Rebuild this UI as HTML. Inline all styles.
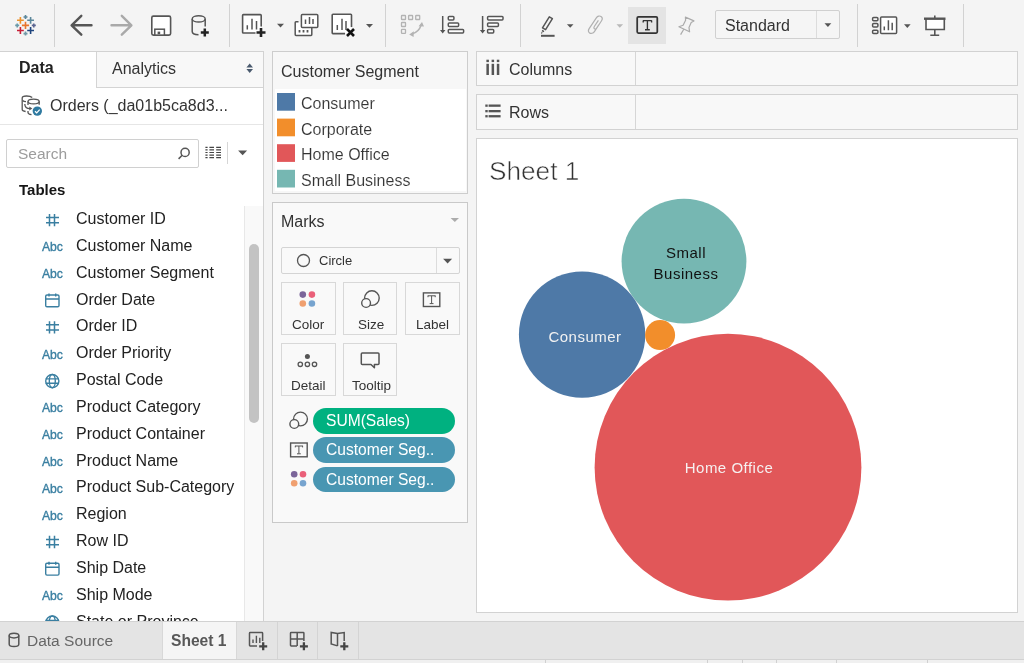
<!DOCTYPE html>
<html><head><meta charset="utf-8">
<style>
*{box-sizing:border-box;margin:0;padding:0}
html,body{-webkit-font-smoothing:antialiased;width:1024px;height:663px;overflow:hidden;background:#f4f4f4;font-family:"Liberation Sans",sans-serif;color:#333}
.a{position:absolute}
.sep{position:absolute;top:4px;width:1px;height:43px;background:#d2d2d2}
.txt{position:absolute;white-space:nowrap;line-height:1;will-change:transform}
#ov{position:absolute;left:0;top:0;width:1024px;height:663px}
</style></head><body>
<!-- toolbar -->
<div class="a" style="left:0;top:0;width:1024px;height:52px;background:#f4f4f4"></div>
<div class="sep" style="left:54px"></div>
<div class="sep" style="left:229px"></div>
<div class="sep" style="left:385px"></div>
<div class="sep" style="left:520px"></div>
<div class="sep" style="left:857px"></div>
<div class="sep" style="left:963px"></div>
<div class="a" style="left:628px;top:7px;width:38px;height:37px;background:#e4e4e4"></div>
<div class="a" style="left:715px;top:10px;width:125px;height:29px;background:#f5f5f5;border:1px solid #d0d0d0;border-radius:2px"></div>
<div class="a" style="left:816px;top:11px;width:1px;height:27px;background:#dcdcdc"></div>

<!-- left panel -->
<div class="a" style="left:0;top:51px;width:264px;height:570px;background:#fff;border-right:1px solid #d2d2d2;border-top:1px solid #d2d2d2"></div>
<div class="a" style="left:96px;top:52px;width:167px;height:36px;background:#f8f8f8;border-left:1px solid #d4d4d4;border-bottom:1px solid #d4d4d4"></div>
<div class="a" style="left:0;top:124px;width:263px;height:1px;background:#e6e6e6"></div>
<div class="a" style="left:6px;top:139px;width:193px;height:29px;border:1px solid #d0d0d0;border-radius:2px;background:#fff"></div>
<div class="a" style="left:227px;top:142px;width:1px;height:22px;background:#d6d6d6"></div>
<!-- scrollbar -->
<div class="a" style="left:244px;top:206px;width:19px;height:415px;background:#f9f9f9;border-left:1px solid #e8e8e8"></div>
<div class="a" style="left:249px;top:244px;width:10px;height:179px;background:#c3c3c3;border-radius:5px"></div>

<!-- legend card -->
<div class="a" style="left:272px;top:51px;width:196px;height:143px;background:#f7f7f7;border:1px solid #cdcdcd"></div>
<div class="a" style="left:275px;top:89px;width:191px;height:102px;background:#fff"></div>

<!-- marks card -->
<div class="a" style="left:272px;top:202px;width:196px;height:321px;background:#f9f9f9;border:1px solid #c9c9c9"></div>
<div class="a" style="left:281px;top:247px;width:179px;height:27px;background:#f9f9f9;border:1px solid #d4d4d4;border-radius:2px"></div>
<div class="a" style="left:436px;top:248px;width:1px;height:25px;background:#dcdcdc"></div>
<div class="a" style="left:281px;top:282px;width:55px;height:53px;border:1px solid #d8d8d8"></div>
<div class="a" style="left:343px;top:282px;width:54px;height:53px;border:1px solid #d8d8d8"></div>
<div class="a" style="left:405px;top:282px;width:55px;height:53px;border:1px solid #d8d8d8"></div>
<div class="a" style="left:281px;top:343px;width:55px;height:53px;border:1px solid #d8d8d8"></div>
<div class="a" style="left:343px;top:343px;width:54px;height:53px;border:1px solid #d8d8d8"></div>
<div class="a" style="left:313px;top:408px;width:142px;height:25.5px;background:#00b180;border-radius:13px"></div>
<div class="a" style="left:313px;top:437.3px;width:142px;height:25.5px;background:#4996b2;border-radius:13px"></div>
<div class="a" style="left:313px;top:466.8px;width:142px;height:25.5px;background:#4996b2;border-radius:13px"></div>

<!-- shelves -->
<div class="a" style="left:476px;top:51px;width:542px;height:35px;background:#f8f8f8;border:1px solid #d2d2d2"></div>
<div class="a" style="left:635px;top:52px;width:1px;height:33px;background:#d6d6d6"></div>
<div class="a" style="left:476px;top:94px;width:542px;height:36px;background:#f8f8f8;border:1px solid #d2d2d2"></div>
<div class="a" style="left:635px;top:95px;width:1px;height:34px;background:#d6d6d6"></div>

<!-- sheet -->
<div class="a" style="left:476px;top:138px;width:542px;height:475px;background:#fff;border:1px solid #d2d2d2"></div>

<!-- tab bar -->
<div class="a" style="left:0;top:621px;width:1024px;height:38px;background:#e4e4e4;border-top:1px solid #d2d2d2"></div>
<div class="a" style="left:0;top:659px;width:1024px;height:4px;background:#f0f0f0;border-top:1px solid #d2d2d2"></div>
<div class="a" style="left:545px;top:660px;width:1px;height:3px;background:#d0d0d0"></div><div class="a" style="left:707px;top:660px;width:1px;height:3px;background:#d0d0d0"></div><div class="a" style="left:742px;top:660px;width:1px;height:3px;background:#d0d0d0"></div><div class="a" style="left:776px;top:660px;width:1px;height:3px;background:#d0d0d0"></div><div class="a" style="left:836px;top:660px;width:1px;height:3px;background:#d0d0d0"></div><div class="a" style="left:927px;top:660px;width:1px;height:3px;background:#d0d0d0"></div>
<div class="a" style="left:162px;top:622px;width:75px;height:37px;background:#f5f5f5;border-left:1px solid #d8d8d8;border-right:1px solid #d8d8d8"></div>
<div class="a" style="left:277px;top:622px;width:1px;height:37px;background:#d4d4d4"></div>
<div class="a" style="left:317px;top:622px;width:1px;height:37px;background:#d4d4d4"></div>
<div class="a" style="left:358px;top:622px;width:1px;height:37px;background:#d4d4d4"></div>

<svg id="ov" width="1024" height="663" viewBox="0 0 1024 663">
<!-- tableau logo -->
<g stroke-width="1.6" fill="none">
<path d="M21.9 25.4H29.1M25.5 21.8V29" stroke="#e8762d"/>
<path d="M17 20.3H23.8M20.4 16.9V23.7" stroke="#eb912b"/>
<path d="M27.2 20.3H34M30.6 16.9V23.7" stroke="#5b879b"/>
<path d="M17 30.5H23.8M20.4 27.1V33.9" stroke="#c72037"/>
<path d="M27.2 30.5H34M30.6 27.1V33.9" stroke="#1f457e"/>
<path d="M23.5 17H27.5M25.5 15V19" stroke="#5b879b"/>
<path d="M15.2 25.4H19.2M17.2 23.4V27.4" stroke="#6a99a8"/>
<path d="M31.8 25.4H35.8M33.8 23.4V27.4" stroke="#5c6692"/>
<path d="M23.5 33.6H27.5M25.5 31.6V35.6" stroke="#7099a6"/>
</g>
<!-- back / forward -->
<path d="M81.3 15.8L71.6 25.3L81.3 34.7M72 25.3H91.5" stroke="#555" stroke-width="2.4" fill="none" stroke-linecap="round" stroke-linejoin="round"/>
<path d="M121.8 15.8L131.4 25.3L121.8 34.7M111.5 25.3H131" stroke="#a9a9a9" stroke-width="2.4" fill="none" stroke-linecap="round" stroke-linejoin="round"/>
<!-- save -->
<rect x="151.8" y="16.1" width="18.8" height="19" rx="1.6" fill="#fff" stroke="#555" stroke-width="1.6"/>
<rect x="154.8" y="29.2" width="9.6" height="5.9" fill="#fff" stroke="#555" stroke-width="1.5"/>
<rect x="157.6" y="31.6" width="2.6" height="2.6" fill="#555"/>
<!-- datasource add -->
<g fill="none" stroke="#555" stroke-width="1.5">
<ellipse cx="198.7" cy="18.9" rx="6.5" ry="3.1"/>
<path d="M192.2 18.9V31.4C192.2 33.4 195 34.6 198.5 34.7M205.2 18.9V26.5"/>
</g>
<rect x="194.5" y="18" width="8" height="3" fill="#fff" opacity="0"/>
<path d="M204.8 28.4V36.4M200.8 32.4H208.8" stroke="#222" stroke-width="2.5"/>
<g fill="#fff">
<rect x="243" y="15" width="18" height="17.6"/>
<rect x="301.8" y="14.9" width="15.6" height="12.2"/>
<rect x="295.6" y="22.2" width="15.8" height="12.8"/>
<rect x="332.6" y="14.7" width="18.5" height="18.5"/>
<rect x="881" y="17.4" width="15.2" height="15.8"/>
<rect x="926.5" y="19.5" width="17.3" height="9.5"/>
</g>
<!-- new worksheet -->
<g fill="none" stroke="#555" stroke-width="1.6">
<path d="M255.5 33H243.4C242.9 33 242.6 32.7 242.6 32.2V15.4C242.6 14.9 242.9 14.6 243.4 14.6H260.4C260.9 14.6 261.2 14.9 261.2 15.4V26.5"/>
<path d="M247.3 25.2V29.6M252 18.7V29.6M256.5 21V29.6" stroke-width="1.5"/>
</g>
<path d="M261 28V37M256.5 32.5H265.5" stroke="#222" stroke-width="2.6"/>
<path d="M277 23.7H284L280.5 27.5Z" fill="#555"/>
<!-- duplicate -->
<g fill="none" stroke="#555" stroke-width="1.5">
<rect x="301.4" y="14.5" width="16.4" height="13" rx="1"/>
<path d="M298.5 21.8H296C295.5 21.8 295.2 22.1 295.2 22.6V34.6C295.2 35.1 295.5 35.4 296 35.4H311C311.5 35.4 311.8 35.1 311.8 34.6V27.5"/>
<path d="M305.5 19.5V24M309.5 17V24M313 19V24"/>
<path d="M299.5 30V32.5M303.5 30V32.5M307.5 30V32.5" stroke-width="1.8"/>
</g>
<!-- clear sheet -->
<g fill="none" stroke="#555" stroke-width="1.6">
<path d="M345 33.6H333C332.5 33.6 332.2 33.3 332.2 32.8V15.1C332.2 14.6 332.5 14.3 333 14.3H350.7C351.2 14.3 351.5 14.6 351.5 15.1V27"/>
<path d="M337.3 25V30M342 18.7V30M346 21V30" stroke-width="1.5"/>
</g>
<path d="M347 29L354 36M354 29L347 36" stroke="#111" stroke-width="2.6"/>
<path d="M366 24H373L369.5 27.8Z" fill="#555"/>
<!-- swap (disabled) -->
<g fill="none" stroke="#b3b3b3" stroke-width="1.3">
<rect x="401.5" y="15.5" width="4" height="4" rx="0.6"/>
<rect x="408.6" y="15.5" width="4" height="4" rx="0.6"/>
<rect x="415.7" y="15.5" width="4" height="4" rx="0.6"/>
<rect x="401.5" y="22.5" width="4" height="4" rx="0.6"/>
<rect x="401.5" y="29.4" width="4" height="4" rx="0.6"/>
<path d="M412 34C416.2 32.8 419.6 29.8 421.2 25" stroke-width="1.5"/>
</g>
<path d="M409.2 34.6L413.8 31.2L413.6 37Z M422 22L418.6 26.2L424 26.6Z" fill="#b3b3b3"/>
<!-- sort asc -->
<g fill="#fff" stroke="#555" stroke-width="1.5">
<path d="M442.7 16V31"/>
<rect x="448.3" y="16.4" width="5.6" height="3.6" rx="0.9"/>
<rect x="448.3" y="22.9" width="10.3" height="3.6" rx="0.9"/>
<rect x="448.3" y="29.4" width="15.3" height="3.6" rx="0.9"/>
<path d="M482.6 16V31"/>
<rect x="487.6" y="16.4" width="15.4" height="3.6" rx="0.9"/>
<rect x="487.6" y="22.9" width="10.8" height="3.6" rx="0.9"/>
<rect x="487.6" y="29.4" width="6.1" height="3.6" rx="0.9"/>
</g>
<path d="M440 30H445.4L442.7 33.6Z M479.9 30H485.3L482.6 33.6Z" fill="#555"/>
<!-- highlighter -->
<g fill="none" stroke="#555" stroke-width="1.5">
<path d="M549.3 16.8L552.4 18.6L545.6 29.6L542.5 27.8Z" stroke-linejoin="round"/>
<path d="M542 30.5L544 31.7M541.3 32.6L542.3 33.2"/>
</g>
<path d="M541 35.8H554.6" stroke="#555" stroke-width="2"/>
<path d="M566.9 24.3H573.5L570.2 27.8Z" fill="#555"/>
<!-- paperclip -->
<path d="M598.6 25.2L594.4 31.6C593.2 33.4 590.9 33.8 589.6 32.9C588.3 32 588.1 30.2 589.3 28.4L596.5 17.6C597.6 16 599.7 15.6 601 16.5C602.3 17.4 602.5 19.4 601.4 21L596.7 28.1C596.1 29 595.1 29.3 594.4 28.8C593.7 28.3 593.7 27.4 594.3 26.5L598.4 20.3" fill="none" stroke="#b0b0b0" stroke-width="1.2"/>
<path d="M616.5 24.3H623.1L619.8 27.8Z" fill="#b9b9b9"/>
<!-- text toggle -->
<rect x="637.2" y="16.8" width="20.1" height="16.2" rx="1.2" fill="none" stroke="#333" stroke-width="1.75"/>
<path d="M643 20.6H651.8M643.2 20.4V22.4M651.6 20.4V22.4M647.4 20.6V29.6M645 29.7H649.8" fill="none" stroke="#333" stroke-width="1.35"/>
<!-- pin -->
<g fill="none" stroke="#ababab" stroke-width="1.2" stroke-linejoin="round">
<path d="M685.4 17.1L693.9 20.9L691.2 22.5L689 27.6L689.6 31.8L678.9 26.7L683.1 25.2L685.6 20.3Z"/>
<path d="M683.8 29.2L680.6 34.6"/>
</g>
<!-- standard arrow -->
<path d="M824.5 23.3H831.3L827.9 27.1Z" fill="#555"/>
<!-- show me -->
<g fill="none" stroke="#555" stroke-width="1.5">
<rect x="872.6" y="17.4" width="5.3" height="3.4" rx="1"/>
<rect x="872.6" y="23.6" width="5.3" height="3.4" rx="1"/>
<rect x="872.6" y="30.2" width="5.3" height="3.4" rx="1"/>
<rect x="880.6" y="17" width="16" height="16.6" rx="1"/>
<path d="M884.3 26.5V30.2M888.4 20.2V30.2M892.2 22.7V30.2"/>
</g>
<path d="M904 24.3H910.6L907.3 27.9Z" fill="#555"/>
<!-- presentation -->
<g fill="none" stroke="#555">
<path d="M924 18.7H945.5" stroke-width="2.4"/>
<path d="M934.8 15.6V18M926 19V29.5H944.3V19M934.8 29.5V35M930.3 35.2H939.2" stroke-width="1.6"/>
</g>

<!-- left panel icons -->
<path d="M246.4 67.6H253L249.7 63.6Z M246.4 69.1H253L249.7 72.9Z" fill="#4a5a6e"/>
<!-- orders icon -->
<g fill="none" stroke="#555" stroke-width="1.3">
<path d="M32.2 97.6C31 96.5 28.6 96 26.6 96C24 96 22.2 96.8 22.2 97.9V109.5C22.2 110.4 23.4 111.2 25.6 111.5"/>
<path d="M22.6 100.5C23.3 101.2 24.6 101.6 26 101.6"/>
<ellipse cx="33.6" cy="101.5" rx="5.6" ry="2.4"/>
<path d="M28 101.5V105M39.2 101.5V104.7"/>
<path d="M24.8 104C24.8 107 26.5 108.6 30 108.6" stroke-width="1.3"/>
<path d="M28 111V112.5C28 113.6 30 114.5 31.5 114.7"/>
</g>
<path d="M29.3 106.6L32.3 108.6L29.3 110.6Z" fill="#555"/>
<circle cx="37.3" cy="111.1" r="4.7" fill="#2f7aa0"/>
<path d="M35 111.2L36.7 112.9L39.7 109.6" fill="none" stroke="#fff" stroke-width="1.3"/>
<!-- search -->
<g fill="none" stroke="#555" stroke-width="1.5">
<circle cx="185.1" cy="152.4" r="4.1"/>
<path d="M182.2 155.3L178.6 158.9"/>
</g>
<g stroke="#444" stroke-width="1.2">
<path d="M205.4 147.3H207.6M209.4 147.3H214M216.2 147.3H221"/>
<path d="M205.4 149.9H207.6M209.4 149.9H214M216.2 149.9H221"/>
<path d="M205.4 152.5H207.6M209.4 152.5H214M216.2 152.5H221"/>
<path d="M205.4 155.1H207.6M209.4 155.1H214M216.2 155.1H221"/>
<path d="M205.4 157.7H207.6M209.4 157.7H214M216.2 157.7H221"/>
</g>
<path d="M238.1 150.4H247.1L242.6 155.3Z" fill="#555"/>

<!-- legend swatches -->
<rect x="277" y="93" width="18" height="17.7" fill="#4e79a7"/>
<rect x="277" y="118.6" width="18" height="17.7" fill="#f28e2b"/>
<rect x="277" y="144.2" width="18" height="17.7" fill="#e15759"/>
<rect x="277" y="169.8" width="18" height="17.7" fill="#76b7b2"/>

<!-- marks icons -->
<path d="M450.6 217.9H459L454.8 222.1Z" fill="#acacac"/>
<circle cx="303.5" cy="260.5" r="6" fill="none" stroke="#555" stroke-width="1.3"/>
<path d="M443.1 258.8H452.1L447.6 263.5Z" fill="#555"/>
<circle cx="302.8" cy="294.6" r="3.3" fill="#7b659a"/>
<circle cx="311.9" cy="294.6" r="3.3" fill="#ea6079"/>
<circle cx="302.8" cy="303.5" r="3.3" fill="#f0a070"/>
<circle cx="311.9" cy="303.5" r="3.3" fill="#77a4cf"/>
<g fill="#f9f9f9" stroke="#555" stroke-width="1.4">
<circle cx="371.9" cy="298.1" r="7.3"/>
<circle cx="366.1" cy="303" r="4.4"/>
</g>
<rect x="423.4" y="292.9" width="16.4" height="13.6" fill="none" stroke="#555" stroke-width="1.4"/>
<path d="M427.8 295.8H435.4M428 295.6V297.2M435.2 295.6V297.2M431.6 295.8V303.4M429.7 303.6H433.5" fill="none" stroke="#555" stroke-width="1"/>
<circle cx="307.4" cy="356.5" r="2.5" fill="#555"/>
<g fill="none" stroke="#555" stroke-width="1.3">
<circle cx="300.3" cy="364.3" r="2.2"/>
<circle cx="307.4" cy="364.3" r="2.2"/>
<circle cx="314.5" cy="364.3" r="2.2"/>
<path d="M362.3 352.9H378C378.6 352.9 379 353.3 379 353.9V363.5C379 364.1 378.6 364.5 378 364.5H374.4V367.8L371 364.5H362.3C361.7 364.5 361.3 364.1 361.3 363.5V353.9C361.3 353.3 361.7 352.9 362.3 352.9Z" stroke-width="1.5" stroke-linejoin="round"/>
</g>
<!-- pill icons -->
<g fill="#f9f9f9" stroke="#555" stroke-width="1.4">
<circle cx="300.5" cy="419" r="6.9"/>
<circle cx="294.3" cy="424" r="4.4"/>
</g>
<rect x="290.6" y="443" width="16.6" height="13.8" fill="none" stroke="#555" stroke-width="1.4"/>
<path d="M295.1 446H302.8M295.3 445.8V447.4M302.6 445.8V447.4M298.9 446V453.6M297 453.8H300.8" fill="none" stroke="#555" stroke-width="1"/>
<circle cx="294.2" cy="474.2" r="3.3" fill="#7b659a"/>
<circle cx="303" cy="474.2" r="3.3" fill="#ea6079"/>
<circle cx="294.2" cy="483.3" r="3.3" fill="#f0a070"/>
<circle cx="303" cy="483.3" r="3.3" fill="#77a4cf"/>

<!-- shelf icons -->
<g fill="#555">
<rect x="486.4" y="59.7" width="2.5" height="2.4"/><rect x="491.6" y="59.7" width="2.5" height="2.4"/><rect x="496.8" y="59.7" width="2.5" height="2.4"/>
<rect x="486.4" y="63.8" width="2.5" height="11.2"/><rect x="491.6" y="63.8" width="2.5" height="11.2"/><rect x="496.8" y="63.8" width="2.5" height="11.2"/>
<rect x="485.3" y="104.5" width="2.4" height="2.3"/><rect x="485.3" y="110" width="2.4" height="2.3"/><rect x="485.3" y="115.1" width="2.4" height="2.3"/>
<rect x="488.6" y="104.5" width="12" height="2.3"/><rect x="488.6" y="110" width="12" height="2.3"/><rect x="488.6" y="115.1" width="12" height="2.3"/>
</g>

<!-- chart circles -->
<circle cx="684" cy="261.2" r="62.4" fill="#76b7b2"/>
<circle cx="582.1" cy="334.6" r="63.2" fill="#4e79a7"/>
<circle cx="660.1" cy="335.1" r="15" fill="#f28e2b"/>
<circle cx="728" cy="467.2" r="133.4" fill="#e15759"/>

<!-- bottom tab icons -->
<g fill="none" stroke="#555" stroke-width="1.5">
<ellipse cx="14" cy="635.6" rx="4.8" ry="2.3"/>
<path d="M9.2 635.6V644.3C9.2 645.6 11.4 646.6 14 646.6C16.6 646.6 18.8 645.6 18.8 644.3V635.6"/>
<path d="M257 646H250.2C249.8 646 249.5 645.7 249.5 645.3V633.2C249.5 632.8 249.8 632.5 250.2 632.5H261.9C262.3 632.5 262.6 632.8 262.6 633.2V641"/>
<path d="M253 639.5V643M256.4 635.8V643M259.8 637.8V643" stroke-width="1.4"/>
<path d="M297 646H291.2C290.8 646 290.5 645.7 290.5 645.3V633.2C290.5 632.8 290.8 632.5 291.2 632.5H303.2C303.6 632.5 303.9 632.8 303.9 633.2V641M290.5 639H303.9M297.2 632.5V646"/>
<path d="M337.5 633.5L331.2 632.5V644L337.5 645.9M337.5 633.5V645.9M337.5 633.5L344.2 632.5V641"/>
</g>
<path d="M263.2 642.3V650.3M259.2 646.3H267.2 M303.9 642.3V650.3M299.9 646.3H307.9 M344.3 642.3V650.3M340.3 646.3H348.3" stroke="#444" stroke-width="2.3"/>

<!--ICONS-->
</svg>

<!-- texts -->
<div class="txt" style="left:18.6px;top:60.1px;font-size:16px;font-weight:bold;color:#222">Data</div>
<div class="txt" style="left:112.4px;top:60.66px;font-size:16px;color:#333">Analytics</div>
<div class="txt" style="left:50.2px;top:97.8px;font-size:16px;color:#333">Orders (_da01b5ca8d3...</div>
<div class="txt" style="left:17.9px;top:146.3px;font-size:15.5px;color:#9c9c9c">Search</div>
<div class="txt" style="left:18.7px;top:181.8px;font-size:15px;font-weight:bold;color:#151515">Tables</div>
<div class="txt" style="left:281.2px;top:63.7px;font-size:16px;color:#333">Customer Segment</div>
<div class="txt" style="left:301.3px;top:96px;font-size:16px;color:#333;-webkit-text-stroke:0.12px #fff">Consumer</div>
<div class="txt" style="left:301.3px;top:121.6px;font-size:16px;color:#333;-webkit-text-stroke:0.12px #fff">Corporate</div>
<div class="txt" style="left:301.3px;top:147.2px;font-size:16px;color:#333;-webkit-text-stroke:0.12px #fff">Home Office</div>
<div class="txt" style="left:301.3px;top:172.8px;font-size:16px;color:#333;-webkit-text-stroke:0.12px #fff">Small Business</div>
<div class="txt" style="left:281.4px;top:214.4px;font-size:16px;color:#333">Marks</div>
<div class="txt" style="left:318.5px;top:254px;font-size:13px;color:#333">Circle</div>
<div class="txt" style="left:292.2px;top:317.9px;font-size:13.5px;color:#333">Color</div>
<div class="txt" style="left:357.5px;top:317.9px;font-size:13.5px;color:#333">Size</div>
<div class="txt" style="left:415.5px;top:317.9px;font-size:13.5px;color:#333">Label</div>
<div class="txt" style="left:290.5px;top:379.1px;font-size:13.5px;color:#333">Detail</div>
<div class="txt" style="left:351.6px;top:379.1px;font-size:13.5px;color:#333">Tooltip</div>
<div class="txt" style="left:326.4px;top:412.5px;font-size:15.6px;color:#fff">SUM(Sales)</div>
<div class="txt" style="left:326.4px;top:442.1px;font-size:15.6px;color:#fff">Customer Seg..</div>
<div class="txt" style="left:326.4px;top:471.7px;font-size:15.6px;color:#fff">Customer Seg..</div>
<div class="txt" style="left:508.6px;top:61.8px;font-size:16px;color:#333">Columns</div>
<div class="txt" style="left:508.6px;top:105.2px;font-size:16px;color:#333">Rows</div>
<div class="txt" style="left:489.2px;top:158.3px;font-size:26.2px;color:#333;-webkit-text-stroke:0.55px #fff">Sheet 1</div>
<div class="txt" style="left:725.4px;top:17.5px;font-size:16px;color:#333">Standard</div>
<div class="txt" style="left:27.2px;top:632.6px;font-size:15.5px;color:#666">Data Source</div>
<div class="txt" style="left:171.3px;top:632.9px;font-size:15.6px;font-weight:bold;color:#585858">Sheet 1</div>
<div class="txt" style="left:484.55px;width:200px;text-align:center;top:328.80px;font-size:15px;letter-spacing:0.5px;color:#f2f2f2">Consumer</div>
<div class="txt" style="left:586.25px;width:200px;text-align:center;top:244.90px;font-size:15px;letter-spacing:0.5px;color:#111">Small</div>
<div class="txt" style="left:586.15px;width:200px;text-align:center;top:265.60px;font-size:15px;letter-spacing:0.5px;color:#111">Business</div>
<div class="txt" style="left:629.15px;width:200px;text-align:center;top:459.90px;font-size:15px;letter-spacing:0.5px;color:#f6f0f0">Home Office</div>
<div class="a" style="left:0;top:200px;width:244px;height:421px;overflow:hidden"><div class="a" style="left:0;top:-200px;width:244px;height:663px"><div class="txt" style="left:75.5px;top:211.16px;font-size:16px;color:#222;font-weight:normal;">Customer ID</div>
<div class="txt" style="left:75.5px;top:237.99px;font-size:16px;color:#222;font-weight:normal;">Customer Name</div>
<div class="txt" style="left:42.3px;top:241.20px;font-size:12.2px;color:#3a7fa1;letter-spacing:-0.1px;-webkit-text-stroke:0.35px #3a7fa1">Abc</div>
<div class="txt" style="left:75.5px;top:264.82px;font-size:16px;color:#222;font-weight:normal;">Customer Segment</div>
<div class="txt" style="left:42.3px;top:268.03px;font-size:12.2px;color:#3a7fa1;letter-spacing:-0.1px;-webkit-text-stroke:0.35px #3a7fa1">Abc</div>
<div class="txt" style="left:75.5px;top:291.65px;font-size:16px;color:#222;font-weight:normal;">Order Date</div>
<div class="txt" style="left:75.5px;top:318.48px;font-size:16px;color:#222;font-weight:normal;">Order ID</div>
<div class="txt" style="left:75.5px;top:345.31px;font-size:16px;color:#222;font-weight:normal;">Order Priority</div>
<div class="txt" style="left:42.3px;top:348.52px;font-size:12.2px;color:#3a7fa1;letter-spacing:-0.1px;-webkit-text-stroke:0.35px #3a7fa1">Abc</div>
<div class="txt" style="left:75.5px;top:372.14px;font-size:16px;color:#222;font-weight:normal;">Postal Code</div>
<div class="txt" style="left:75.5px;top:398.97px;font-size:16px;color:#222;font-weight:normal;">Product Category</div>
<div class="txt" style="left:42.3px;top:402.18px;font-size:12.2px;color:#3a7fa1;letter-spacing:-0.1px;-webkit-text-stroke:0.35px #3a7fa1">Abc</div>
<div class="txt" style="left:75.5px;top:425.80px;font-size:16px;color:#222;font-weight:normal;">Product Container</div>
<div class="txt" style="left:42.3px;top:429.01px;font-size:12.2px;color:#3a7fa1;letter-spacing:-0.1px;-webkit-text-stroke:0.35px #3a7fa1">Abc</div>
<div class="txt" style="left:75.5px;top:452.63px;font-size:16px;color:#222;font-weight:normal;">Product Name</div>
<div class="txt" style="left:42.3px;top:455.84px;font-size:12.2px;color:#3a7fa1;letter-spacing:-0.1px;-webkit-text-stroke:0.35px #3a7fa1">Abc</div>
<div class="txt" style="left:75.5px;top:479.46px;font-size:16px;color:#222;font-weight:normal;">Product Sub-Category</div>
<div class="txt" style="left:42.3px;top:482.67px;font-size:12.2px;color:#3a7fa1;letter-spacing:-0.1px;-webkit-text-stroke:0.35px #3a7fa1">Abc</div>
<div class="txt" style="left:75.5px;top:506.29px;font-size:16px;color:#222;font-weight:normal;">Region</div>
<div class="txt" style="left:42.3px;top:509.50px;font-size:12.2px;color:#3a7fa1;letter-spacing:-0.1px;-webkit-text-stroke:0.35px #3a7fa1">Abc</div>
<div class="txt" style="left:75.5px;top:533.12px;font-size:16px;color:#222;font-weight:normal;">Row ID</div>
<div class="txt" style="left:75.5px;top:559.95px;font-size:16px;color:#222;font-weight:normal;">Ship Date</div>
<div class="txt" style="left:75.5px;top:586.78px;font-size:16px;color:#222;font-weight:normal;">Ship Mode</div>
<div class="txt" style="left:42.3px;top:589.99px;font-size:12.2px;color:#3a7fa1;letter-spacing:-0.1px;-webkit-text-stroke:0.35px #3a7fa1">Abc</div>
<div class="txt" style="left:75.5px;top:613.61px;font-size:16px;color:#222;font-weight:normal;">State or Province</div>
<svg class="a" style="left:0;top:0;overflow:visible" width="244" height="663" viewBox="0 0 244 663"><g stroke="#3a7fa1" stroke-width="1.5" fill="none"><path d="M49.5 213.9V226.29999999999998M54.5 213.9V226.29999999999998M46 217.5H59M46 222.7H59"/></g>
<g stroke="#3a7fa1" stroke-width="1.4" fill="none"><rect x="45.7" y="294.98999999999995" width="13.3" height="11.8" rx="1.3"/><path d="M45.7 298.98999999999995H59M49 293.39V296.39M55.7 293.39V296.39"/></g>
<g stroke="#3a7fa1" stroke-width="1.5" fill="none"><path d="M49.5 321.21999999999997V333.61999999999995M54.5 321.21999999999997V333.61999999999995M46 324.81999999999994H59M46 330.02H59"/></g>
<g stroke="#3a7fa1" stroke-width="1.4" fill="none"><circle cx="52.3" cy="381.0799999999999" r="6.6"/><ellipse cx="52.3" cy="381.0799999999999" rx="3" ry="6.6"/><path d="M45.7 378.87999999999994H58.9M45.7 383.2799999999999H58.9"/></g>
<g stroke="#3a7fa1" stroke-width="1.5" fill="none"><path d="M49.5 535.8599999999999V548.26M54.5 535.8599999999999V548.26M46 539.4599999999999H59M46 544.66H59"/></g>
<g stroke="#3a7fa1" stroke-width="1.4" fill="none"><rect x="45.7" y="563.29" width="13.3" height="11.8" rx="1.3"/><path d="M45.7 567.29H59M49 561.6899999999999V564.6899999999999M55.7 561.6899999999999V564.6899999999999"/></g>
<g stroke="#3a7fa1" stroke-width="1.4" fill="none"><circle cx="52.3" cy="622.55" r="6.6"/><ellipse cx="52.3" cy="622.55" rx="3" ry="6.6"/><path d="M45.7 620.3499999999999H58.9M45.7 624.75H58.9"/></g></svg></div></div>
</body></html>
